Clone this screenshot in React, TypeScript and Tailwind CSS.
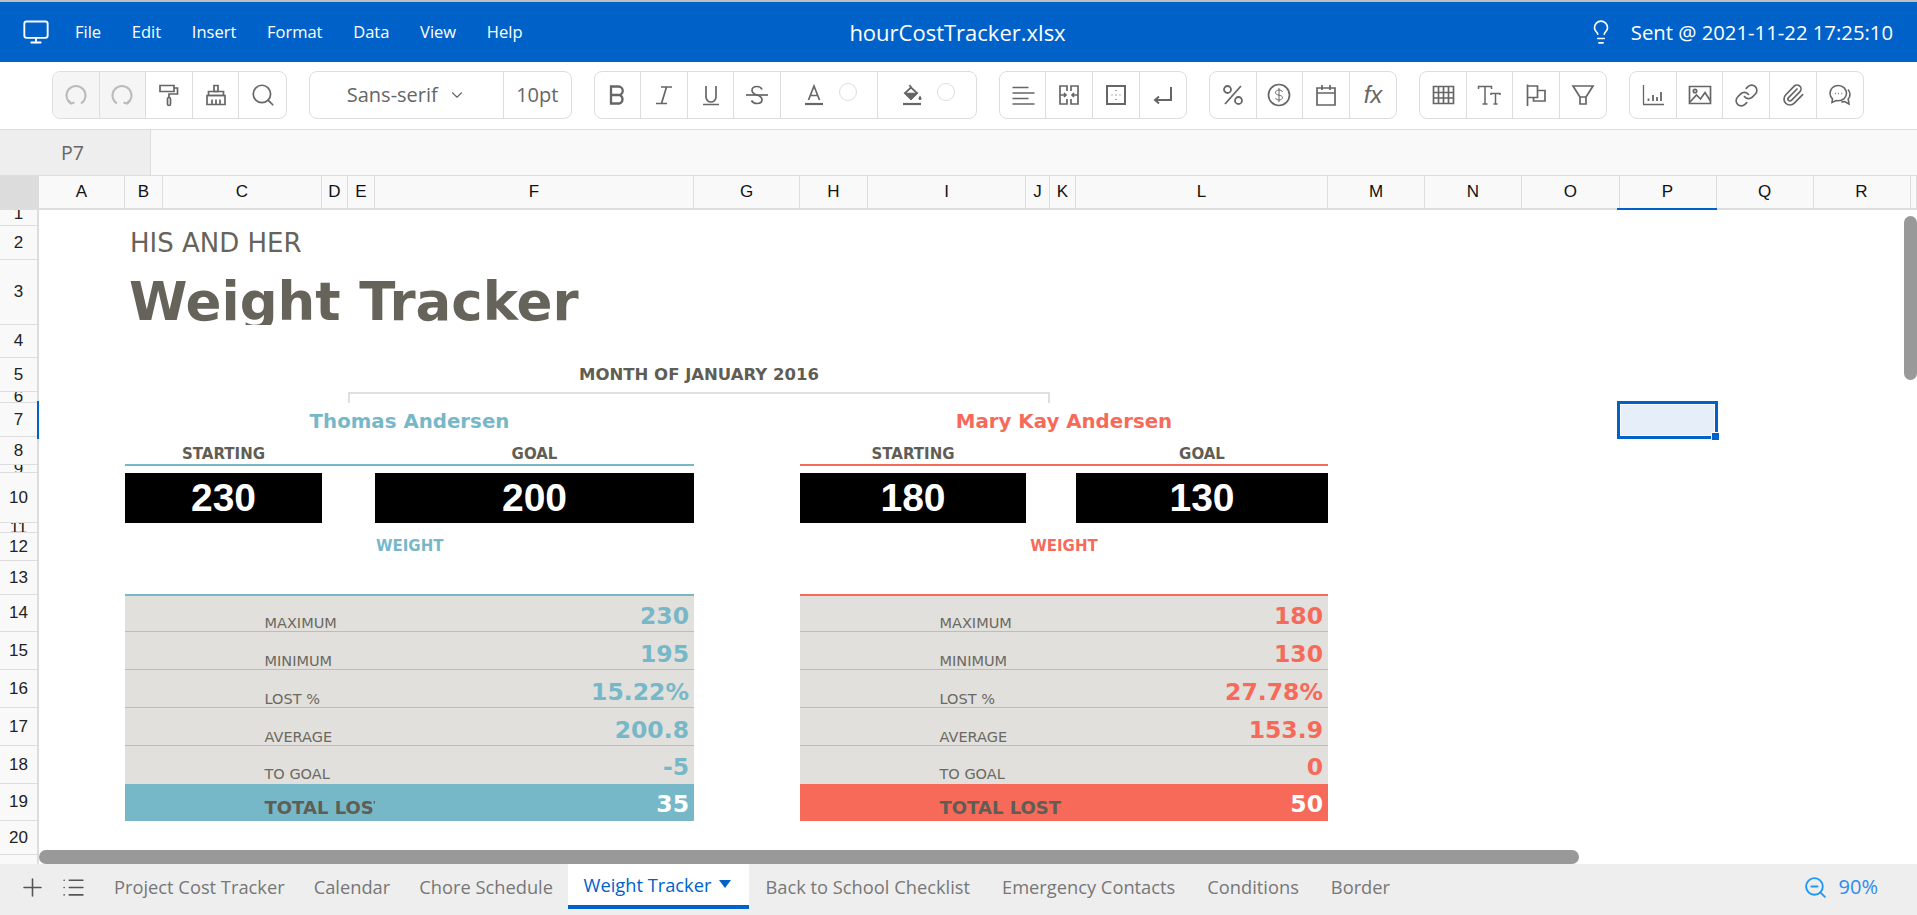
import type { ReactNode } from "react";
import { Lightbulb, Link, List, Monitor, Paperclip, Plus, Search, ChevronDown, ZoomOut } from "lucide-react";

const Svg = ({ children, w = 1.7, c = "#666" }: { children: ReactNode; w?: number; c?: string }) => (
  <svg width="24" height="24" viewBox="0 0 24 24" fill="none" stroke={c} strokeWidth={w}>
    {children}
  </svg>
);

const Cell = ({ children, cls = "w-[46.6px]", off }: { children?: ReactNode; cls?: string; off?: boolean }) => (
  <div className={`${cls} ${off ? "bg-[#f5f5f5]" : ""} flex items-center justify-center border-r border-[#ddd] last:border-r-0 first:rounded-l-lg`}>
    {children}
  </div>
);

const Group = ({ children }: { children: ReactNode }) => (
  <div className="flex h-12 rounded-lg border border-[#ddd] bg-white">{children}</div>
);

const Swatch = () => <span className="ml-[13px] mb-[6px] h-[18px] w-[18px] rounded-full border border-[#ddd]" />;

const Toolbar = () => (
  <div className="flex h-[68px] gap-[21.8px] border-b border-[#ddd] bg-white pl-[52px] pt-[9px]">
    <Group>
      <Cell off>
        <Svg c="#bbb" w={2}>
          <path d="M7 20.5a9.5 9.5 0 1 1 10 0" />
          <path d="M4.5 17.5 7 20.5l3.5-1" />
        </Svg>
      </Cell>
      <Cell off>
        <Svg c="#bbb" w={2}>
          <path d="M7 20.5a9.5 9.5 0 1 1 10 0" />
          <path d="M19.5 17.5 17 20.5l-3.5-1" />
        </Svg>
      </Cell>
      <Cell>
        <Svg>
          <path d="M3 2.5h14v6H3z" />
          <path d="M17 5h3.5v6H12v3.5" />
          <rect x="10.5" y="14.5" width="3" height="8" rx="1.5" />
        </Svg>
      </Cell>
      <Cell>
        <Svg>
          <path d="M10 2.5h4v6h-4z" />
          <path d="M4.5 8.5h15v4h-15z" />
          <path d="M3 12.5h18v9H3z" />
          <path d="M8 16.5v5M12 16.5v5M16 16.5v5" />
        </Svg>
      </Cell>
      <Cell>
        <Search size={26} color="#666" strokeWidth={1.6} />
      </Cell>
    </Group>
    <Group>
      <div className="flex w-[194px] items-center justify-center gap-[10px] border-r border-[#ddd] text-[20px] text-[#666]">
        Sans-serif
        <ChevronDown size={18} color="#666" strokeWidth={1.5} />
      </div>
      <div className="flex w-[67px] items-center justify-center text-[20px] text-[#666]">10pt</div>
    </Group>
    <Group>
      <Cell>
        <Svg w={2.3}>
          <path d="M6 3.500h7.500a4 4 0 0 1 0 8.500H6zM6 12h8.500a4.500 4.500 0 0 1 0 8.500H6z" />
        </Svg>
      </Cell>
      <Cell>
        <Svg>
          <path d="M9 4h11M4 20.500h11M14.500 4 9.500 20.500" />
        </Svg>
      </Cell>
      <Cell>
        <Svg>
          <path d="M7 3v11a5 5 0 0 0 10 0V3M4 21.500h16" />
        </Svg>
      </Cell>
      <Cell>
        <Svg>
          <path d="M1 12h22" />
          <path d="M17 6.500c-.8-2-2.800-3-5-3-3 0-5 1.500-5 4 0 5.500 10 3.500 10 9 0 2.500-2 4-5 4-2.500 0-4.500-1-5.500-3" />
        </Svg>
      </Cell>
      <Cell cls="w-[97.5px]">
        <Svg>
          <path d="M6.500 17 12 3l5.500 14M8.200 12.500h7.600" />
          <path d="M3 21h18" strokeWidth={2.2} />
        </Svg>
        <Swatch />
      </Cell>
      <Cell cls="w-[97.5px]">
        <Svg>
          <path d="M9.500 2 11 4.500" />
          <path d="M11 4.500 17 10l-6 6-6-6z" />
          <path d="M5.500 10.500h11l-5.500 5.500z" fill="#666" />
          <path d="M20 12.500c.9 1.300 1.500 2.200 1.500 3a1.500 1.500 0 0 1-3 0c0-.8.600-1.700 1.500-3z" fill="#666" stroke="none" />
          <path d="M3 21h18" strokeWidth={2.2} />
        </Svg>
        <Swatch />
      </Cell>
    </Group>
    <Group>
      <Cell>
        <Svg>
          <path d="M1.500 4.500h16M1.500 10h22M1.500 15.500h16M1.500 21h22" />
        </Svg>
      </Cell>
      <Cell>
        <Svg>
          <path d="M10 8V3H3v18h7v-5M14 8V3h7v18h-7v-5" />
          <path d="M3 12h6M7 10l2 2-2 2M21 12h-6M17 10l-2 2 2 2" />
        </Svg>
      </Cell>
      <Cell>
        <Svg w={2}>
          <rect x="3" y="3" width="18" height="18" />
          <path d="M12 7v1M12 11.500v1M12 16v1M7.500 12h1M15.500 12h1" strokeWidth={1.2} />
        </Svg>
      </Cell>
      <Cell>
        <Svg w={2}>
          <path d="M20 4v13H4M8 13.500l-4 3.500 4 3.500" />
        </Svg>
      </Cell>
    </Group>
    <Group>
      <Cell>
        <Svg w={1.8}>
          <circle cx="6.500" cy="6.500" r="3.500" />
          <circle cx="17.500" cy="17.500" r="3.500" />
          <path d="M20 3 4 21" />
        </Svg>
      </Cell>
      <Cell>
        <Svg w={1.7}>
          <circle cx="12" cy="12" r="10.500" />
          <path d="M15.500 9c-.5-1.500-2-2-3.500-2-2 0-3.500 1-3.500 2.500 0 3.500 7 2 7 5 0 1.500-1.500 2.500-3.500 2.500-1.500 0-3-.7-3.500-2M12 5v14" strokeWidth={1} />
        </Svg>
      </Cell>
      <Cell>
        <Svg>
          <path d="M3 5h18v17H3zM3 10h18M8 2v5M16 2v5" />
        </Svg>
      </Cell>
      <Cell>
        <span className="font-['Liberation_Sans',sans-serif] text-[24px] italic leading-none text-[#666]">fx</span>
      </Cell>
    </Group>
    <Group>
      <Cell>
        <Svg>
          <path d="M2.500 3.500h20v17h-20zM2.500 9.500h20M2.500 15h20M7.500 3.500v17M12.500 3.500v17M17.500 3.500v17" />
        </Svg>
      </Cell>
      <Cell>
        <Svg w={1.5}>
          <path d="M1.500 6V3.500h13V6M8 3.500V21M5.500 21H10.500" />
          <path d="M14 12v-1.500h9V12M18.500 10.500V21M16.500 21h4" />
        </Svg>
      </Cell>
      <Cell>
        <Svg>
          <path d="M3.500 1.500V23M3.500 3h10v11.500h-10M13.500 7.500h7.500V18H9.500v-3.500" />
        </Svg>
      </Cell>
      <Cell>
        <Svg>
          <path d="M2 3h20l-7 11v7H9v-7zM9 14h6" />
        </Svg>
      </Cell>
    </Group>
    <Group>
      <Cell>
        <Svg w={1.3}>
          <path d="M2.500 2v19M2 21.500h21" />
          <path d="M7.500 18v-2.500M12 18v-6M16 18v-4M20 18V9" strokeWidth={1.800} />
        </Svg>
      </Cell>
      <Cell>
        <Svg>
          <path d="M1.500 3.500h21v17h-21z" />
          <circle cx="7" cy="8" r="1.700" />
          <path d="M2 19l6.500-7 4 4 4.500-6.500 5.500 8.500" />
        </Svg>
      </Cell>
      <Cell>
        <Link size={25} color="#666" strokeWidth={1.6} />
      </Cell>
      <Cell>
        <Paperclip size={24} color="#666" strokeWidth={1.7} />
      </Cell>
      <Cell>
        <Svg w={1.6}>
          <path d="M10.500 2.500c-5 0-8.500 3.300-8.500 7.800 0 2.300 1 4.200 2.500 5.500l-.5 3.700 4.200-2c.6.1 1.200.2 1.800.2 5 0 8.500-3.200 8.500-7.400s-3.500-7.800-8-7.800z" />
          <path d="M20 6.500c1.300 1.300 2 3 2 4.800 0 1.900-.7 3.500-1.800 4.700l.8 5-4.500-2.500c-1.300.4-2.300.4-3.200.2" />
          <path d="M7 10.500h.8M10.200 10.500h.8M13.400 10.500h.8" strokeWidth={1.500} />
        </Svg>
      </Cell>
    </Group>
  </div>
);

const rowHeights = [
  ["1", "h-[16px]"],
  ["2", "h-[34px]"],
  ["3", "h-[65px]"],
  ["4", "h-[33px]"],
  ["5", "h-[34px]"],
  ["6", "h-[11px]"],
  ["7", "h-[34px]"],
  ["8", "h-[28px]"],
  ["9", "h-[8px]"],
  ["10", "h-[50px]"],
  ["11", "h-[10px]"],
  ["12", "h-[28px]"],
  ["13", "h-[34px]"],
  ["14", "h-[37px]"],
  ["15", "h-[38px]"],
  ["16", "h-[38px]"],
  ["17", "h-[38px]"],
  ["18", "h-[38px]"],
  ["19", "h-[37px]"],
  ["20", "h-[34px]"],
];

const columns = "grid-cols-[86px_38px_159px_26px_27px_319px_106px_68px_158px_24px_26px_252px_97px_97px_97.5px_97px_97px_97px_6.5px]";

const ColumnHeader = () => (
  <div className="flex h-[34px] border-b-2 border-[#ddd] bg-[#f9f9f9]">
    <div className="w-[39px] shrink-0 bg-[#dcdcdc]" />
    <div className={`grid flex-1 ${columns} font-['Liberation_Sans',sans-serif] text-[17px] text-[#111]`}>
      {"ABCDEFGHIJKLMNOPQR".split("").map((l) => (
        <div key={l} className="relative flex items-center justify-center border-r border-[#ddd]">
          {l}
          {l === "P" && <span className="absolute -bottom-[2px] -left-[2.5px] -right-[1.5px] h-[2px] bg-[#0062c9]" />}
        </div>
      ))}
      <div className="border-r border-[#ddd]" />
    </div>
  </div>
);

const RowHeader = () => (
  <div className="w-[39px] shrink-0 border-r-2 border-[#ddd] bg-[#f9f9f9] font-['Liberation_Sans',sans-serif] text-[17px] text-[#222]">
    {rowHeights.map(([n, h]) => (
      <div key={n} className={`${h} flex items-center justify-center overflow-hidden border-b border-[#ddd] ${n === "1" ? "items-start" : ""}`}>
        <span className={n === "1" ? "-mt-[9px]" : ""}>{n}</span>
      </div>
    ))}
  </div>
);

type Stat = { label: string; value: string };

const Person = ({
  col,
  first,
  second,
  name,
  start,
  goal,
  weightCls,
  text,
  bg,
  border,
  stats,
  total,
  totalLabel,
  labelW,
}: {
  col: string;
  first: string;
  second: string;
  name: string;
  start: string;
  goal: string;
  weightCls: string;
  text: string;
  bg: string;
  border: string;
  stats: Stat[];
  total: string;
  totalLabel: string;
  labelW: string;
}) => (
  <>
    <div className={`${col} row-start-7 flex items-center justify-center pt-[3px] text-[19.8px] font-bold ${text}`}>{name}</div>
    <div className={`${first} row-start-8 flex items-center justify-center pt-[6px] text-[15px] font-bold text-[#5f5d54]`}>STARTING</div>
    <div className={`${second} row-start-8 flex items-center justify-center pt-[7px] text-[15px] font-bold text-[#5f5d54]`}>GOAL</div>
    <div className={`${col} row-start-9 -mt-px h-[2px] ${bg}`} />
    <div className={`${first} row-start-10 flex items-center justify-center bg-black font-['Liberation_Sans',sans-serif] text-[39px] font-bold text-white`}>{start}</div>
    <div className={`${second} row-start-10 flex items-center justify-center bg-black font-['Liberation_Sans',sans-serif] text-[39px] font-bold text-white`}>{goal}</div>
    <div className={`${weightCls} row-start-12 flex items-center pb-[2px] text-[15px] font-bold ${text}`}>WEIGHT</div>
    <div className={`${col} row-start-14 row-span-5 flex flex-col border-t-2 bg-[#e1e0dc] ${border}`}>
      {stats.map((s) => (
        <div key={s.label} className="flex h-[38px] items-end justify-between border-b border-[#bdbdb8] pr-[5px] first:h-[36px] last:border-b-0 last:pb-[2px]">
          <span className="pl-[139.5px] text-[14.5px] leading-[16px] text-[#6b6961]">{s.label}</span>
          <span className={`text-[23.5px] leading-[30px] font-bold ${text}`}>{s.value}</span>
        </div>
      ))}
    </div>
    <div className={`${col} row-start-19 flex items-end justify-between border-t-2 pr-[5px] ${border} ${bg}`}>
      <span className={`${labelW} overflow-hidden whitespace-nowrap pl-[139.5px] text-[18px] font-bold leading-[26px] text-[#5f5d54]`}>{totalLabel}</span>
      <span className="pb-[2px] text-[23.5px] leading-[30px] font-bold text-white">{total}</span>
    </div>
  </>
);

const Sheet = () => (
  <div className="relative flex h-[654px] overflow-hidden bg-white">
    <RowHeader />
    <div
      className={`grid flex-1 ${columns} grid-rows-[16px_34px_65px_33px_34px_11px_34px_28px_8px_50px_10px_28px_33px_38px_38px_38px_38px_38px_37px_34px] font-['DejaVu_Sans',sans-serif]`}
    >
      <div className="col-start-2 col-span-5 row-start-2 flex items-center pl-[5px] text-[26px] text-[#66645a]">HIS AND HER</div>
      <div className="col-start-2 col-span-11 row-start-3 overflow-hidden whitespace-nowrap pl-[4px] text-[53px] leading-[84px] font-bold text-[#66645a]">Weight Tracker</div>
      <div className="col-start-5 col-span-6 row-start-5 flex items-center justify-center pt-[1px] text-[16.5px] font-bold text-[#5f5d54]">MONTH OF JANUARY 2016</div>
      <div className="col-start-5 col-span-6 row-start-6 border-x-2 border-t-2 border-[#dfdfdb]" />
      <Person
        col="col-start-2 col-span-5"
        first="col-start-2 col-span-2"
        second="col-start-6"
        name="Thomas Andersen"
        start="230"
        goal="200"
        weightCls="col-start-6 pl-[1px]"
        text="text-[#77b8c8]"
        bg="bg-[#77b8c8]"
        border="border-[#77b8c8]"
        labelW="w-[250px]"
        totalLabel="TOTAL LOST"
        total="35"
        stats={[
          { label: "MAXIMUM", value: "230" },
          { label: "MINIMUM", value: "195" },
          { label: "LOST %", value: "15.22%" },
          { label: "AVERAGE", value: "200.8" },
          { label: "TO GOAL", value: "-5" },
        ]}
      />
      <Person
        col="col-start-8 col-span-5"
        first="col-start-8 col-span-2"
        second="col-start-12"
        name="Mary Kay Andersen"
        start="180"
        goal="130"
        weightCls="col-start-8 col-span-5 justify-center"
        text="text-[#f76a5a]"
        bg="bg-[#f76a5a]"
        border="border-[#f76a5a]"
        labelW="w-[276px]"
        totalLabel="TOTAL LOST"
        total="50"
        stats={[
          { label: "MAXIMUM", value: "180" },
          { label: "MINIMUM", value: "130" },
          { label: "LOST %", value: "27.78%" },
          { label: "AVERAGE", value: "153.9" },
          { label: "TO GOAL", value: "0" },
        ]}
      />
    </div>

    {/* selection + scrollbars sit over the grid */}
    <div className="absolute left-[37px] top-[191px] h-[38px] w-[2px] bg-[#0062c9]" />
    <div className="absolute left-[1617px] top-[191px] h-[38px] w-[101px] border-[3px] border-[#0062c9] bg-[#e6eff9] outline outline-1 -outline-offset-4 outline-white" />
    <div className="absolute left-[1711px] top-[222px] h-[9px] w-[9px] border border-white bg-[#0062c9]" />
    <div className="absolute left-[1904px] top-[6px] h-[164px] w-[13px] rounded-full bg-[#999]" />
    <div className="absolute left-[39px] top-[640px] h-[14px] w-[1540px] rounded-full bg-[#999]" />
  </div>
);

const tabsBefore = ["Project Cost Tracker", "Calendar", "Chore Schedule"];
const tabsAfter = ["Back to School Checklist", "Emergency Contacts", "Conditions", "Border"];

const Tabs = () => (
  <div className="flex h-[51px] items-start bg-[#eee] text-[18.3px] text-[#777]">
    <div className="flex h-[46px] w-[99.5px] items-center gap-[14px] pl-[18px]">
      <Plus size={29} color="#555" strokeWidth={1.3} />
      <List size={25} color="#555" strokeWidth={1.6} />
    </div>
    <div className="flex">
      {tabsBefore.map((t) => (
        <div key={t} className="flex h-[45px] items-center px-[14.5px]">
          {t}
        </div>
      ))}
      <div className="flex h-[45px] items-center gap-[8px] border-b-4 border-[#0062c9] bg-white pl-[16px] pr-[18px] text-[#0062c9]">
        Weight Tracker
        <span className="mb-[2px] h-0 w-0 border-x-[6px] border-t-[8px] border-x-transparent border-t-[#0062c9]" />
      </div>
      {tabsAfter.map((t) => (
        <div key={t} className="flex h-[45px] items-center px-[16px]">
          {t}
        </div>
      ))}
    </div>
    <div className="ml-auto flex h-[46px] items-center gap-[11px] pr-[39px] text-[#2d8cf0]">
      <ZoomOut size={25} color="#2196f3" strokeWidth={1.8} />
      <span className="text-[20px]">90%</span>
    </div>
  </div>
);

export default function App() {
  return (
    <div className="h-[915px] w-full overflow-hidden bg-white font-['Open_Sans',sans-serif]">
      <div className="h-[2px] bg-[#c0c0c0]" />
      <div className="flex h-[60px] items-center bg-[#0062c9] pl-[22px] pr-[24px] text-white">
        <div className="flex flex-1 items-center gap-[25px] text-[16.5px]">
          <Monitor size={28} strokeWidth={1.6} />
          <div className="flex gap-[30.7px]">
            {["File", "Edit", "Insert", "Format", "Data", "View", "Help"].map((m) => (
              <span key={m}>{m}</span>
            ))}
          </div>
        </div>
        <div className="text-[22px]">hourCostTracker.xlsx</div>
        <div className="flex flex-1 items-center justify-end gap-[17px] text-[20.3px]">
          <Lightbulb size={26} strokeWidth={1.5} />
          <span>Sent @ 2021-11-22 17:25:10</span>
        </div>
      </div>
      <Toolbar />
      <div className="flex h-[46px] border-b border-[#ddd] bg-[#f9f9f9]">
        <div className="flex w-[151px] items-center border-r border-[#ddd] bg-[#eee] pl-[61px] text-[19.5px] text-[#666]">P7</div>
      </div>
      <ColumnHeader />
      <Sheet />
      <Tabs />
    </div>
  );
}
